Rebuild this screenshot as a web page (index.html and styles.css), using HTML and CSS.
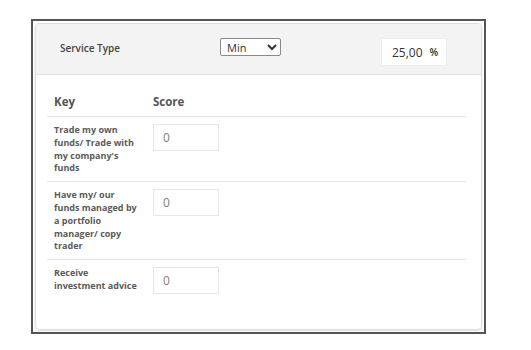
FILE: index.html
```html
<!DOCTYPE html>
<html lang="en">
<head>
    <meta charset="UTF-8">
    <title>Service Type Score</title>
    <link rel="stylesheet" href="styles.css">
</head>
<body>
    <div class="frame">
        <div class="card">
            <div class="card-head">
                <div class="service-label">Service Type</div>
                <select class="service-select">
                    <option>Min</option>
                    <option>Max</option>
                </select>
                <div class="percent-box">
                    <span class="percent-value">25,00</span>
                    <span class="percent-sign">%</span>
                </div>
            </div>

            <div class="score-table">
                <div class="score-row score-head">
                    <div class="col-key">Key</div>
                    <div class="col-score">Score</div>
                </div>
                <div class="score-row">
                    <div class="col-key">Trade my own funds/ Trade with my company's funds</div>
                    <div class="col-score"><input class="score-input" type="text" value="0"></div>
                </div>
                <div class="score-row">
                    <div class="col-key">Have my/ our funds managed by a portfolio manager/ copy trader</div>
                    <div class="col-score"><input class="score-input" type="text" value="0"></div>
                </div>
                <div class="score-row last">
                    <div class="col-key">Receive investment advice</div>
                    <div class="col-score"><input class="score-input" type="text" value="0"></div>
                </div>
            </div>
        </div>
    </div>
</body>
</html>
```
FILE: styles.css
```css
body {
    margin: 0;
    padding: 0;
    background-color: #fff;
    font-family: 'Open Sans', sans-serif;
    color: #555;
}

.frame {
    box-sizing: border-box;
    width: 455px;
    height: 315px;
    margin: 19px 0 0 31px;
    padding: 2px;
    border: 2px solid #555;
}

.card {
    box-sizing: border-box;
    height: 100%;
    border: 1px solid #ddd;
    border-radius: 4px;
    box-shadow: 0 1px 2px rgba(0, 0, 0, 0.12);
    overflow: hidden;
}

/* top gray strip */
.card-head {
    display: flex;
    align-items: flex-start;
    height: 51px;
    box-sizing: border-box;
    padding: 14px 0 0 24px;
    background-color: #f3f3f3;
    border-bottom: 1px solid #e3e3e3;
}

.service-label {
    width: 160px;
    padding-top: 3px;
    font-size: 10px;
    font-weight: 600;
    color: #444;
}

.service-select {
    width: 61px;
    height: 18px;
    padding: 0 0 0 2px;
    margin: 0;
    font-family: 'Open Sans', sans-serif;
    font-size: 11px;
    color: #333;
    background-color: #fff;
    border: 1px solid #8a8a8a;
    border-radius: 2px;
}

.percent-box {
    display: flex;
    align-items: center;
    box-sizing: border-box;
    width: 66px;
    height: 28px;
    margin-left: 100px;
    padding-left: 10px;
    background-color: #fff;
    border: 1px solid #ececec;
    font-size: 12px;
    color: #333;
}

.percent-sign {
    margin-left: 7px;
    font-size: 10px;
    font-weight: 600;
}

/* score list */
.score-table {
    margin: 0 15px 0 11px;
    padding-top: 19px;
}

.score-row {
    display: flex;
    align-items: flex-start;
    padding: 7px 0 6px;
    border-bottom: 1px solid #e5e5e5;
}

.score-row.last {
    border-bottom: none;
}

.score-row.score-head {
    padding: 0 0 6px;
    font-size: 11.5px;
    font-weight: 700;
    line-height: 16px;
}

.col-key {
    box-sizing: border-box;
    width: 106px;
    padding: 0 14px 0 7px;
    font-size: 9px;
    font-weight: 700;
    line-height: 12.8px;
    color: #5a5a5a;
}

.score-head .col-key {
    font-size: 11.5px;
    line-height: 16px;
    color: #555;
}

.score-input {
    box-sizing: border-box;
    width: 66px;
    height: 27px;
    margin: 0;
    padding: 0 0 0 9px;
    font-family: 'Open Sans', sans-serif;
    font-size: 12px;
    color: #8a7d70;
    border: 1px solid #e6e6e6;
    outline: none;
}
```
